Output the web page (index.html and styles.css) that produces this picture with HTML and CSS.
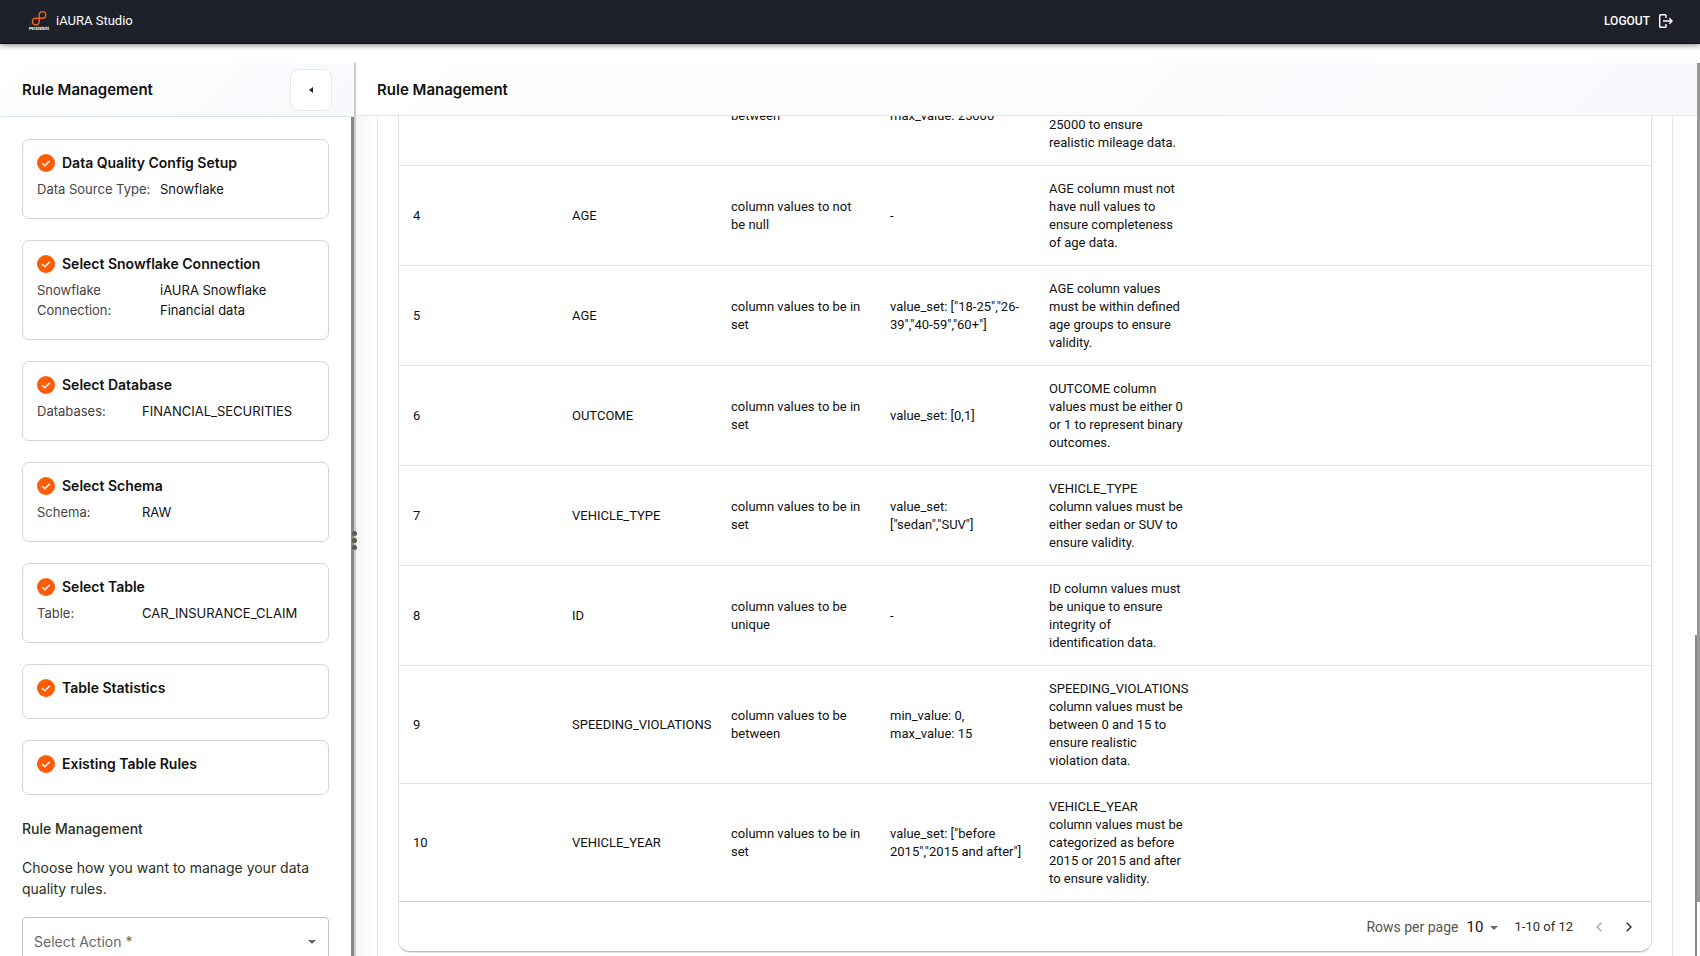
FILE: index.html
```html
<!DOCTYPE html>
<html lang="en">

<head>
  <meta charset="utf-8">
  <title>iAURA Studio</title>
  <link rel="stylesheet" href="styles.css">
</head>

<body>
  <!-- check icon used by every finished step -->
  <svg class="icon-defs" width="0" height="0">
    <symbol id="check" viewBox="0 0 18 18">
      <circle cx="9" cy="9" r="9" fill="#ff5c0a" />
      <path d="M5.2 9.3l2.6 2.5 5-5" fill="none" stroke="#fff" stroke-width="1.5" />
    </symbol>
  </svg>

  <header class="navbar">
    <div class="brand">
      <div class="logo">
        <svg width="16" height="16" viewBox="0 0 16 16" fill="none" stroke="#f26522" stroke-width="1.4">
          <path d="M8.200 11.500V4.800a3.300 3.300 0 1 1 3.300 3.400H4.800a3.400 3.400 0 1 0 3.400 3.300" />
        </svg>
        <span class="logo-name">Persistent</span>
      </div>
      <span class="brand-name">iAURA Studio</span>
    </div>
    <button class="logout" type="button">LOGOUT
      <svg width="14" height="14" viewBox="0 0 14 14" fill="none" stroke="#fff" stroke-width="1.4">
        <path d="M7 4V1.500a.8.8 0 0 0-.8-.8H1.500a.8.8 0 0 0-.8.8v11a.8.8 0 0 0 .8.8h4.700A.8.8 0 0 0 7 12.500V10M4 7h9M10.300 4.200L13 7l-2.700 2.800" />
      </svg>
    </button>
  </header>

  <div class="layout">
    <aside class="sidebar">
      <div class="sidebar-header">
        <h2>Rule Management</h2>
        <button class="collapse" type="button" aria-label="Collapse">
          <svg width="4" height="6" viewBox="0 0 4 6"><path d="M4 0v6L0 3z" fill="#222" /></svg>
        </button>
      </div>
      <div class="sidebar-body">
        <div class="steps">
          <section class="step">
            <h3><svg width="18" height="18"><use href="#check" /></svg>Data Quality Config Setup</h3>
            <dl class="wide"><dt>Data Source Type:</dt><dd>Snowflake</dd></dl>
          </section>
          <section class="step">
            <h3><svg width="18" height="18"><use href="#check" /></svg>Select Snowflake Connection</h3>
            <dl class="wide"><dt>Snowflake<br>Connection:</dt><dd>iAURA Snowflake<br>Financial data</dd></dl>
          </section>
          <section class="step">
            <h3><svg width="18" height="18"><use href="#check" /></svg>Select Database</h3>
            <dl><dt>Databases:</dt><dd>FINANCIAL_SECURITIES</dd></dl>
          </section>
          <section class="step">
            <h3><svg width="18" height="18"><use href="#check" /></svg>Select Schema</h3>
            <dl><dt>Schema:</dt><dd>RAW</dd></dl>
          </section>
          <section class="step">
            <h3><svg width="18" height="18"><use href="#check" /></svg>Select Table</h3>
            <dl><dt>Table:</dt><dd>CAR_INSURANCE_CLAIM</dd></dl>
          </section>
          <section class="step">
            <h3><svg width="18" height="18"><use href="#check" /></svg>Table Statistics</h3>
          </section>
          <section class="step">
            <h3><svg width="18" height="18"><use href="#check" /></svg>Existing Table Rules</h3>
          </section>
        </div>
        <h4>Rule Management</h4>
        <p>Choose how you want to manage your data quality rules.</p>
        <div class="select-box">
          <select class="action-select" aria-label="Select Action">
            <option>Select Action *</option>
          </select>
          <svg class="caret" width="8" height="4" viewBox="0 0 8 4"><path d="M0 0h8L4 4z" fill="#666" /></svg>
        </div>
      </div>
      <div class="sidebar-scroll"></div>
    </aside>

    <div class="divider">
      <div class="handle"><i></i><i></i><i></i></div>
    </div>

    <main class="main">
      <div class="main-header">
        <h2>Rule Management</h2>
      </div>
      <div class="main-body">
        <div class="panel">
          <div class="table-card">
            <table class="rules">
              <colgroup>
                <col class="c"><col class="c"><col class="c"><col class="c"><col class="c"><col>
              </colgroup>
              <tbody>
                <tr>
                  <td>3</td>
                  <td>ANNUAL_MILEAGE</td>
                  <td>column values to be between</td>
                  <td>min_value: 1000, max_value: 25000</td>
                  <td>ANNUAL_MILEAGE column values must be between 1000 and 25000 to ensure realistic mileage data.</td>
                  <td></td>
                </tr>
                <tr>
                  <td>4</td>
                  <td>AGE</td>
                  <td>column values to not be null</td>
                  <td>-</td>
                  <td>AGE column must not have null values to ensure completeness of age data.</td>
                  <td></td>
                </tr>
                <tr>
                  <td>5</td>
                  <td>AGE</td>
                  <td>column values to be in set</td>
                  <td>value_set: ["18-25","26-39","40-59","60+"]</td>
                  <td>AGE column values must be within defined age groups to ensure validity.</td>
                  <td></td>
                </tr>
                <tr>
                  <td>6</td>
                  <td>OUTCOME</td>
                  <td>column values to be in set</td>
                  <td>value_set: [0,1]</td>
                  <td>OUTCOME column values must be either 0 or 1 to represent binary outcomes.</td>
                  <td></td>
                </tr>
                <tr>
                  <td>7</td>
                  <td>VEHICLE_TYPE</td>
                  <td>column values to be in set</td>
                  <td>value_set: ["sedan","SUV"]</td>
                  <td>VEHICLE_TYPE<br>column values must be either sedan or SUV to ensure validity.</td>
                  <td></td>
                </tr>
                <tr>
                  <td>8</td>
                  <td>ID</td>
                  <td>column values to be unique</td>
                  <td>-</td>
                  <td>ID column values must be unique to ensure integrity of identification data.</td>
                  <td></td>
                </tr>
                <tr>
                  <td>9</td>
                  <td>SPEEDING_VIOLATIONS</td>
                  <td>column values to be between</td>
                  <td>min_value: 0, max_value: 15</td>
                  <td>SPEEDING_VIOLATIONS column values must be between 0 and 15 to ensure realistic violation data.</td>
                  <td></td>
                </tr>
                <tr>
                  <td>10</td>
                  <td>VEHICLE_YEAR</td>
                  <td>column values to be in set</td>
                  <td>value_set: ["before 2015","2015 and after"]</td>
                  <td>VEHICLE_YEAR<br>column values must be categorized as before 2015 or 2015 and after to ensure validity.</td>
                  <td></td>
                </tr>
              </tbody>
            </table>
            <div class="pagination">
              <label for="rows">Rows per page</label>
              <div class="rows-box">
                <select id="rows">
                  <option>10</option>
                </select>
                <svg class="caret" width="8" height="4" viewBox="0 0 8 4"><path d="M0 0h8L4 4z" fill="#666" /></svg>
              </div>
              <span class="range">1-10 of 12</span>
              <button type="button" disabled aria-label="Previous page">
                <svg width="6" height="10" viewBox="0 0 6 10"><path d="M5.300.7L1 5l4.300 4.300" /></svg>
              </button>
              <button type="button" aria-label="Next page">
                <svg width="6" height="10" viewBox="0 0 6 10"><path d="M.7.7L5 5 .7 9.300" /></svg>
              </button>
            </div>
          </div>
        </div>
      </div>
      <div class="main-scroll"></div>
    </main>
    <div class="page-scroll"></div>
  </div>
</body>

</html>
```

FILE: styles.css
```css
* {
  box-sizing: border-box;
}

body {
  margin: 0;
  height: 100vh;
  display: flex;
  flex-direction: column;
  overflow: hidden;
  background-color: #fff;
  color: #111;
  font-family: Inter, "Liberation Sans", sans-serif;
}

h2,
h3,
h4,
p,
dl,
dd {
  margin: 0;
}

button,
select {
  font-family: inherit;
  border: none;
  background: none;
  cursor: pointer;
}

.icon-defs {
  position: absolute;
}

/* Navigation bar */
.navbar {
  flex: none;
  height: 44px;
  padding: 0 27px 2px 28px;
  display: flex;
  justify-content: space-between;
  align-items: center;
  background-color: #1e212a;
  border-bottom: 1px solid #0c0d14;
  box-shadow: 0 1px 6px rgba(0, 0, 0, 0.5);
  color: #fff;
}

.brand {
  display: flex;
  align-items: center;
  gap: 6px;
}

.logo {
  display: flex;
  flex-direction: column;
  align-items: center;
  width: 22px;
}

.logo-name {
  font-size: 4px;
  line-height: 5px;
  font-weight: 700;
}

.brand-name {
  font-family: Roboto, sans-serif;
  font-size: 13px;
  font-weight: 400;
}

.logout {
  display: flex;
  align-items: center;
  gap: 9px;
  padding: 0;
  color: #fff;
  font-family: Roboto, sans-serif;
  font-size: 12px;
  font-weight: 500;
}

/* Page layout */
.layout {
  flex: 1;
  min-height: 0;
  display: flex;
  padding-top: 19px;
}

.sidebar {
  flex: none;
  width: 354px;
  display: flex;
  flex-direction: column;
  position: relative;
  overflow: hidden;
}

.sidebar-header {
  flex: none;
  height: 54px;
  padding: 0 22px;
  display: flex;
  justify-content: space-between;
  align-items: center;
  background: linear-gradient(135deg, #fff, #f7f9fc);
  border-bottom: 1px solid #dfe2e5;
}

h2 {
  font-size: 15px;
  font-weight: 600;
}

.collapse {
  width: 42px;
  height: 42px;
  display: flex;
  align-items: center;
  justify-content: center;
  border: 1px solid #e6e8ea;
  border-radius: 8px;
  background-color: #fff;
}

.sidebar-body {
  padding: 22px 25px 0 22px;
}

.sidebar-scroll {
  position: absolute;
  top: 54px;
  right: 0;
  bottom: 0;
  width: 3px;
  background-color: #888;
}

.steps {
  display: flex;
  flex-direction: column;
  gap: 21px;
}

.step {
  padding: 12px 14px 19px;
  border: 1px solid #d4d4d4;
  border-radius: 7px;
}

.step h3 {
  display: flex;
  align-items: center;
  gap: 7px;
  font-size: 14px;
  line-height: 22px;
  font-weight: 600;
}

.step dl {
  display: grid;
  grid-template-columns: 105px 1fr;
  margin-top: 5px;
  font-size: 13px;
  line-height: 20px;
}

.step dl.wide {
  grid-template-columns: 123px 1fr;
}

.step dt {
  color: #444;
}

.sidebar h4 {
  margin-top: 23px;
  font-size: 14px;
  line-height: 21px;
  font-weight: 500;
  color: #2b2e22;
}

.sidebar p {
  margin: 18px 0;
  font-size: 14px;
  line-height: 21px;
  color: #2b2e22;
}

.select-box,
.rows-box {
  position: relative;
}

.action-select {
  width: 100%;
  height: 48px;
  padding: 0 11px;
  appearance: none;
  border: 1px solid #c4c4c4;
  border-radius: 4px;
  font-size: 14px;
  color: #666;
}

.caret {
  position: absolute;
  top: calc(50% - 1px);
  right: 13px;
  pointer-events: none;
}

/* Divider between the two panes */
.divider {
  flex: none;
  width: 2px;
  position: relative;
  background-color: #ccc;
}

.handle {
  position: absolute;
  top: 0;
  bottom: 0;
  left: -2px;
  z-index: 1;
  display: flex;
  flex-direction: column;
  justify-content: center;
  gap: 2px;
  padding-top: 62px;
}

.handle i {
  width: 5px;
  height: 5px;
  border-radius: 50%;
  background-color: #5c5c50;
}

.main {
  flex: 1;
  min-width: 0;
  display: flex;
  flex-direction: column;
  position: relative;
}

.main-header {
  flex: none;
  height: 53px;
  padding: 0 21px;
  display: flex;
  align-items: center;
  background: linear-gradient(135deg, #fff, #f7f9fc);
  border-bottom: 1px solid #e4e6e9;
}

/* the list stays at its last rows */
.main-body {
  flex: 1;
  min-height: 0;
  display: flex;
  flex-direction: column;
  justify-content: flex-end;
  overflow: hidden;
  padding: 0 24px 0 21px;
  background: linear-gradient(90deg, #f6f6f6, #fff 22px);
}

.panel {
  padding: 20px 20px 4px;
  border: solid #e6e6e6;
  border-width: 1px 1px 0;
  background-color: #fff;
}

.table-card {
  border: 1px solid #e0e0e0;
  border-bottom: 1px solid #bdbdbd;
  border-radius: 12px;
  box-shadow: 0 1px 1px rgba(0, 0, 0, 0.1);
}

.rules {
  width: 100%;
  table-layout: fixed;
  border-collapse: separate;
  border-spacing: 0;
  font-family: Roboto, sans-serif;
  font-size: 13px;
  line-height: 18px;
}

.rules .c {
  width: 12.7%;
}

.rules td {
  padding: 14px 8px 13px 14px;
  border-bottom: 1px solid #e0e0e0;
  vertical-align: middle;
}

.rules tr:last-child td {
  border-bottom-color: #ccc;
}

.pagination {
  height: 49px;
  padding: 0 14px;
  display: flex;
  align-items: center;
  justify-content: flex-end;
  font-family: Roboto, sans-serif;
  font-size: 14px;
  color: #555;
}

.rows-box {
  margin: 0 16px 0 8px;
}

.rows-box select {
  width: 32px;
  padding: 0;
  appearance: none;
  font-size: 15px;
  color: #111;
}

.rows-box .caret {
  right: 0;
}

.range {
  margin-right: 18px;
  font-size: 13px;
  color: #2b2e22;
}

.pagination button {
  width: 16px;
  height: 24px;
  display: flex;
  align-items: center;
  justify-content: center;
  padding: 0;
}

.pagination button + button {
  margin-left: 14px;
}

.pagination button path {
  fill: none;
  stroke: #333;
  stroke-width: 1.5;
}

.pagination button:disabled path {
  stroke: #aaa;
}

.main-scroll {
  position: absolute;
  top: 64%;
  right: 0;
  bottom: 0;
  width: 2px;
  background-color: #888;
}

.page-scroll {
  flex: none;
  width: 3px;
  height: 94%;
  background-color: #999;
}
```
